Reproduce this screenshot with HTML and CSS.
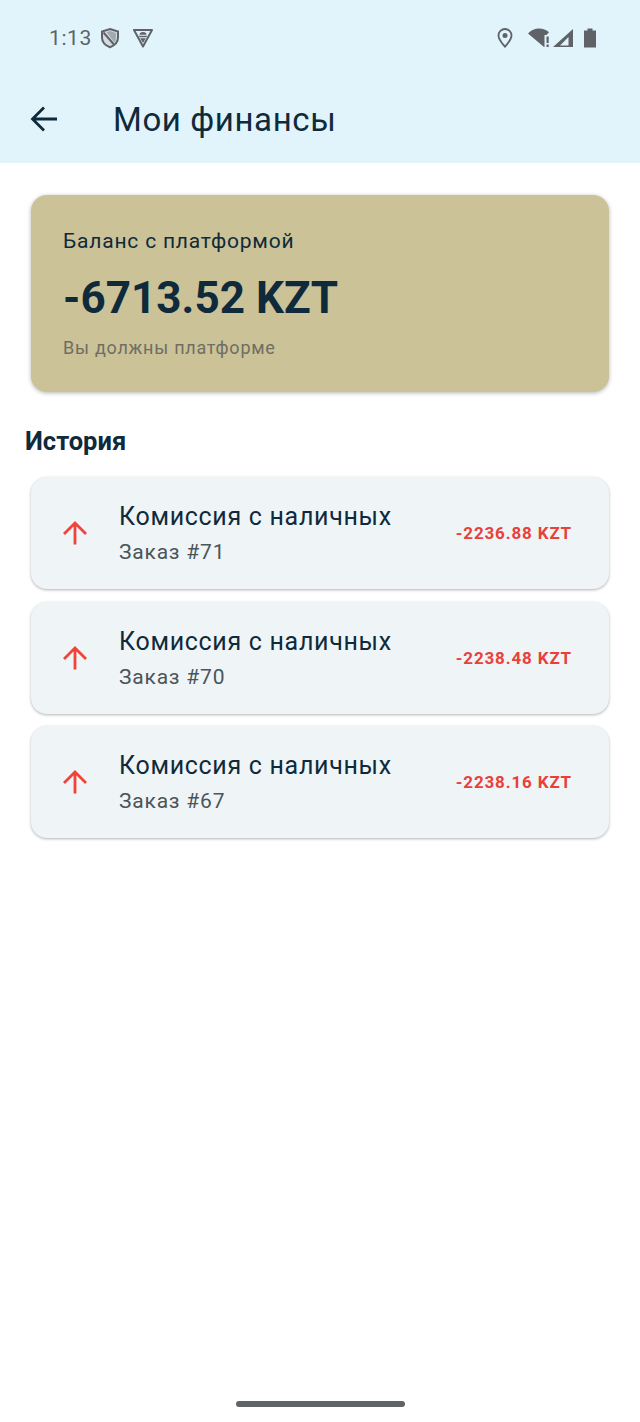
FILE: index.html
```html
<!DOCTYPE html>
<html>
  <head>
    <meta charset="utf-8" />
    <meta content="width=device-width, initial-scale=1" name="viewport" />
    <title>Мои финансы</title>
    <link rel="stylesheet" href="styles.css">
  </head>
  <body>
    <div class="screen">
      <div class="header">
        <div class="statusbar">
          <span class="clock">1:13</span>
          <svg class="st-shield" width="20" height="22" viewBox="0 0 20 22"><path d="M10 2l8 2.600v6c0 4.600-3.200 7.900-8 9.600-4.800-1.700-8-5-8-9.600v-6z" fill="#d3dde1" stroke="#5f6368" stroke-width="2"/><path d="M3.500 5.500l10.500 12" stroke="#5f6368" stroke-width="2"/><path d="M6.500 5.200L10 4l6 2v4.600c0 1.900-.6 3.500-1.700 4.800z" fill="#a3abaf"/></svg>
          <svg class="st-vpn" width="22" height="20" viewBox="0 0 22 20"><path d="M2 2h18L11 18.500z" fill="none" stroke="#5f6368" stroke-width="2" stroke-linejoin="round"/><path d="M7.500 6.800a3.500 2.800 0 0 1 7 0z M6.700 7.800h8.600l-1 1.400H7.700z M8.200 10.200h5.600L11 15z" fill="#5f6368"/></svg>
          <span class="spacer"></span>
          <svg class="st-pin" width="16" height="20" viewBox="0 0 16 20"><path d="M8 1a6.500 6.500 0 0 1 6.500 6.500c0 4.300-3.700 7.700-6.500 11.200C5.200 15.200 1.500 11.800 1.500 7.500A6.500 6.500 0 0 1 8 1z" fill="none" stroke="#5f6368" stroke-width="1.800"/><circle cx="8" cy="7.500" r="2.500" fill="#5f6368"/></svg>
          <svg class="st-wifi" width="24" height="20" viewBox="0 0 24 20"><path d="M1 5.500C4 2 8 .5 12 .5s7 1.200 10 3.800l-2.500 2.700h-2v12h-.5z" fill="#5f6368"/><path d="M19.500 8.500h2.200v6.500h-2.200zM19.500 16.500h2.200v2.500h-2.200z" fill="#5f6368"/></svg>
          <svg class="st-signal" width="20" height="20" viewBox="0 0 20 20"><path d="M20 1v18H0z M15.500 9L7 17.500h8.500z" fill="#5f6368" fill-rule="evenodd"/></svg>
          <svg class="st-batt" width="14" height="20" viewBox="0 0 14 20"><path d="M4.500 .5h5V2.500H13V19.500H1V2.500h3.500z" fill="#5f6368"/></svg>
        </div>
        <div class="appbar">
          <svg class="back" width="30" height="30" viewBox="0 0 30 30"><path d="M28 15H4M15 3.500L3.500 15 15 26.500" fill="none" stroke="#0f2a3a" stroke-width="2.800"/></svg>
          <span class="title">Мои финансы</span>
        </div>
      </div>

      <div class="content">
        <div class="balance">
          <div class="balance-label">Баланс с платформой</div>
          <div class="balance-sum">-6713.52 KZT</div>
          <div class="balance-note">Вы должны платформе</div>
        </div>

        <div class="section-title">История</div>

        <div class="tx-list">
          <div class="tx">
            <svg class="tx-icon" width="26" height="26" viewBox="0 0 26 26"><path d="M13 24.500V3.500M2 14L13 3l11 11" fill="none" stroke="#f0443a" stroke-width="2.800"/></svg>
            <div class="tx-text">
              <div class="tx-name">Комиссия с наличных</div>
              <div class="tx-order">Заказ #71</div>
            </div>
            <div class="tx-sum">-2236.88 KZT</div>
          </div>
          <div class="tx">
            <svg class="tx-icon" width="26" height="26" viewBox="0 0 26 26"><path d="M13 24.500V3.500M2 14L13 3l11 11" fill="none" stroke="#f0443a" stroke-width="2.800"/></svg>
            <div class="tx-text">
              <div class="tx-name">Комиссия с наличных</div>
              <div class="tx-order">Заказ #70</div>
            </div>
            <div class="tx-sum">-2238.48 KZT</div>
          </div>
          <div class="tx">
            <svg class="tx-icon" width="26" height="26" viewBox="0 0 26 26"><path d="M13 24.500V3.500M2 14L13 3l11 11" fill="none" stroke="#f0443a" stroke-width="2.800"/></svg>
            <div class="tx-text">
              <div class="tx-name">Комиссия с наличных</div>
              <div class="tx-order">Заказ #67</div>
            </div>
            <div class="tx-sum">-2238.16 KZT</div>
          </div>
        </div>
      </div>

      <div class="home-bar"></div>
    </div>
  </body>
</html>
```

FILE: styles.css
```css
html, body {
  height: 100%;
  margin: 0;
}
body {
  background-color: white;
  color: #0f2a3a;
  font-family: Roboto, sans-serif;
}
.screen {
  display: flex;
  flex-direction: column;
  height: 1422px;
  overflow: hidden;
}
.header {
  background-color: #e1f4fb;
  flex: none;
  height: 163px;
}
.statusbar {
  align-items: center;
  display: flex;
  height: 20px;
  padding: 28px 43px 0 49px;
}
.statusbar svg {
  flex: none;
}
.clock {
  color: #5f6368;
  font-size: 21px;
  letter-spacing: 0.6px;
  margin-right: 8px;
}
.st-vpn {
  margin-left: 12px;
}
.spacer {
  flex-grow: 1;
}
.st-wifi {
  margin-left: 14px;
}
.st-signal {
  margin-left: 2px;
}
.st-batt {
  margin-left: 10px;
}
.appbar {
  align-items: center;
  display: flex;
  height: 56px;
  margin-top: 43px;
  padding-left: 29px;
}
.title {
  font-size: 33px;
  letter-spacing: 0.6px;
  margin-left: 54px;
}
.content {
  flex-grow: 1;
  padding: 32px 31px 0 31px;
}
.balance {
  background-color: #cbc298;
  border-radius: 16px;
  box-shadow: 0 1px 4px rgba(0, 0, 0, 0.3);
  box-sizing: border-box;
  height: 197px;
  padding: 33px 32px 0 32px;
}
.balance-label {
  font-size: 21px;
  letter-spacing: 0.8px;
  line-height: 26px;
}
.balance-sum {
  font-size: 44px;
  font-weight: 700;
  letter-spacing: 0.05px;
  line-height: 52px;
  margin-top: 18px;
}
.balance-note {
  color: #6f6e63;
  font-size: 18px;
  letter-spacing: 0.75px;
  line-height: 24px;
  margin-top: 12px;
}
.section-title {
  font-size: 25.5px;
  font-weight: 700;
  line-height: 30px;
  margin: 34px 0 0 -6px;
}
.tx-list {
  display: flex;
  flex-direction: column;
  gap: 12.5px;
  margin-top: 21px;
}
.tx {
  align-items: center;
  background-color: #eff4f7;
  border-radius: 16px;
  box-shadow: 0 1px 3px rgba(0, 0, 0, 0.3);
  box-sizing: border-box;
  display: flex;
  height: 112px;
  padding: 0 37px 0 31px;
}
.tx-icon {
  flex: none;
}
.tx-text {
  flex-grow: 1;
  margin-left: 31px;
}
.tx-name {
  font-size: 25px;
  letter-spacing: 0.7px;
  line-height: 32px;
}
.tx-order {
  color: #4a5459;
  font-size: 21px;
  letter-spacing: 0.8px;
  line-height: 26px;
  margin-top: 6px;
}
.tx-sum {
  color: #e8413a;
  font-size: 17px;
  font-weight: 700;
  letter-spacing: 0.85px;
}
.home-bar {
  background-color: #5f6368;
  border-radius: 3px;
  bottom: 15px;
  height: 6px;
  left: 236px;
  position: absolute;
  width: 169px;
}
```
